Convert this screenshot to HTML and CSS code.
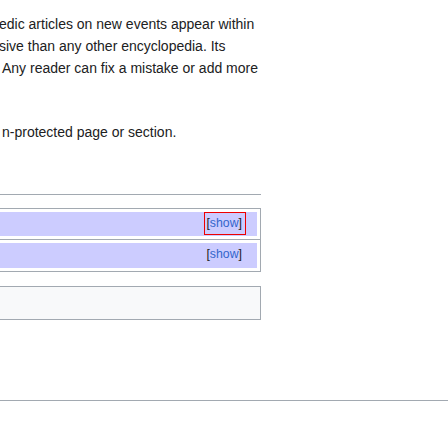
FILE: index.html
```html
<!DOCTYPE html>
<html lang="en">
<head>
<meta charset="utf-8">
<title>Article</title>
<link rel="stylesheet" href="styles.css">
</head>
<body>
<div class="page">
  <p class="lead">
    <span class="line">edic articles on new events appear within</span>
    <span class="line">sive than any other encyclopedia. Its</span>
    <span class="line line-indent">Any reader can fix a mistake or add more</span>
  </p>
  <p class="note">n-protected page or section.</p>
  <div class="rule"></div>
  <div class="navgroup">
    <div class="navbox">
      <div class="navbox-title">
        <span class="toggle toggle-focus">[<a class="toggle-link" href="#">show</a>]</span>
      </div>
    </div>
    <div class="navbox">
      <div class="navbox-title">
        <span class="toggle">[<a class="toggle-link" href="#">show</a>]</span>
      </div>
    </div>
  </div>
  <div class="catlinks"></div>
</div>
<div class="footer"></div>
</body>
</html>
```

FILE: styles.css
```css
html, body {
  margin: 0;
  padding: 0;
  background: #ffffff;
  overflow: hidden;
}

body {
  font-family: "Liberation Sans", Arial, sans-serif;
  font-size: 14px;
  line-height: 22px;
  color: #202122;
}

.page {
  margin-left: -20px;
  width: 281px;
}

.lead {
  margin: 13px 0 0 0;
  padding-left: 19px;
  white-space: nowrap;
}

.line {
  display: block;
}

.line-indent {
  padding-left: 3px;
}

.note {
  margin: 42px 0 0 0;
  padding-left: 22px;
  white-space: nowrap;
}

.rule {
  margin-top: 51px;
  border-top: 1px solid #a2a9b1;
}

.navgroup {
  margin-top: 13px;
}

.navbox {
  border: 1px solid #a2a9b1;
  padding: 3px;
}

.navbox + .navbox {
  border-top: 0;
}

.navbox-title {
  height: 24.4px;
  background: #ccccff;
  display: flex;
  justify-content: flex-end;
  align-items: flex-start;
}

.toggle {
  display: inline-block;
  font-size: 12.3px;
  line-height: 21px;
  padding: 0 3px 0 1px;
  margin-right: 11px;
  border: 1px solid transparent;
  color: #202122;
}

.toggle-focus {
  border-color: #ee0000;
}

.toggle-link {
  color: #3366cc;
  text-decoration: none;
}

.catlinks {
  margin-top: 14px;
  height: 32px;
  border: 1px solid #a2a9b1;
  background: #f8f9fa;
}

.footer {
  margin-top: 80px;
  border-top: 1px solid #a2a9b1;
}
```
